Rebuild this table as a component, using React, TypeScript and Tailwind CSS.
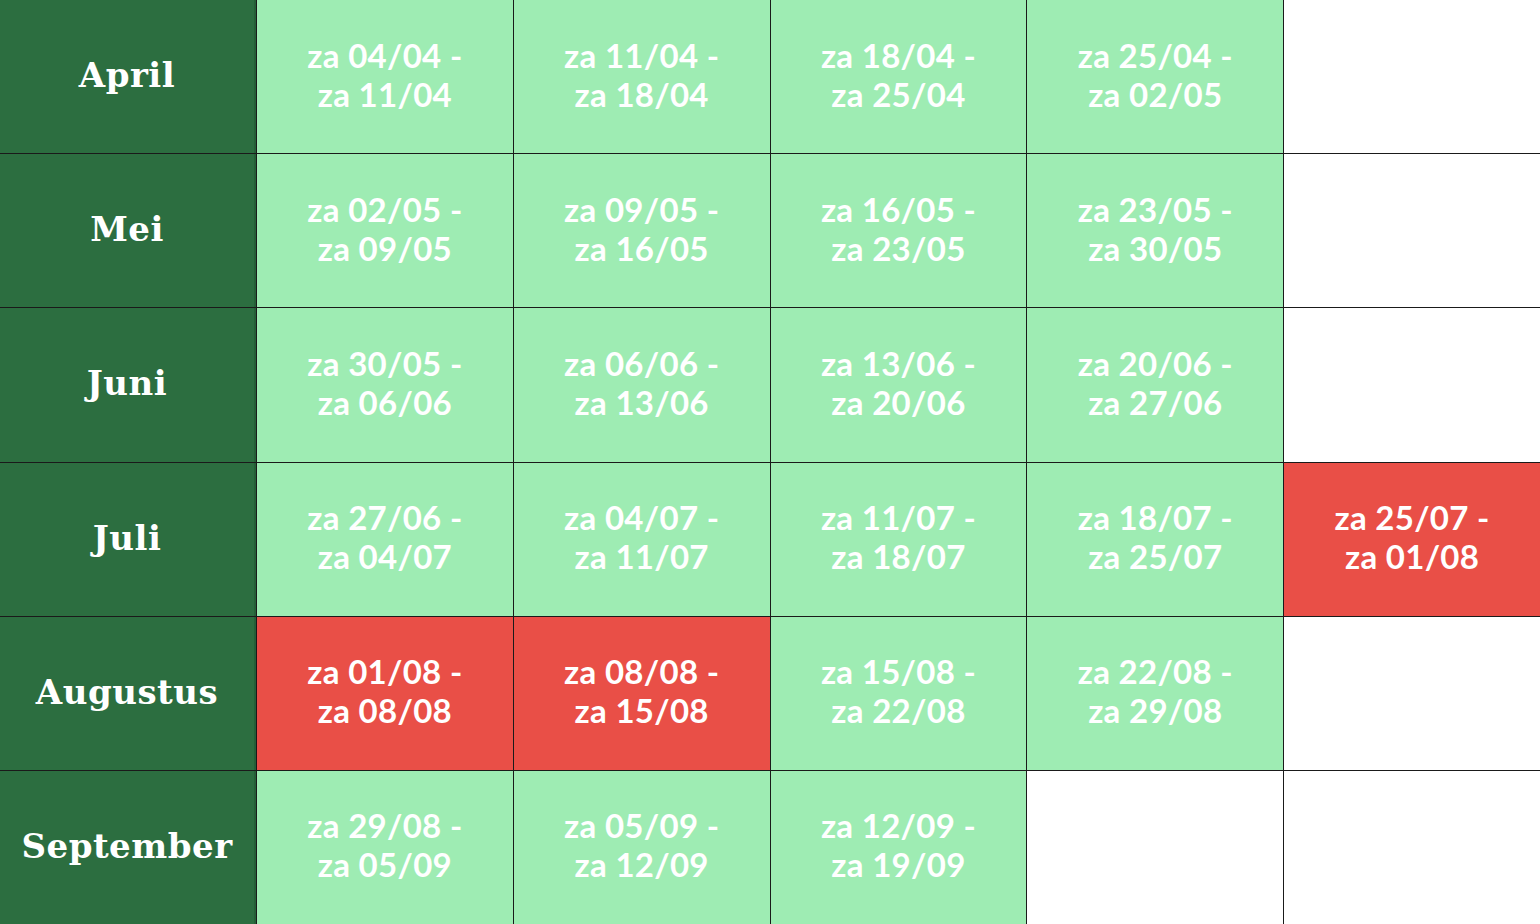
import React from "react";

type Cell = { t: string; c: "g" | "r" } | null;

const rows: { m: string; cells: Cell[] }[] = [
  { m: "April", cells: [{ t: "za 04/04 -|za 11/04", c: "g" }, { t: "za 11/04 -|za 18/04", c: "g" }, { t: "za 18/04 -|za 25/04", c: "g" }, { t: "za 25/04 -|za 02/05", c: "g" }, null] },
  { m: "Mei", cells: [{ t: "za 02/05 -|za 09/05", c: "g" }, { t: "za 09/05 -|za 16/05", c: "g" }, { t: "za 16/05 -|za 23/05", c: "g" }, { t: "za 23/05 -|za 30/05", c: "g" }, null] },
  { m: "Juni", cells: [{ t: "za 30/05 -|za 06/06", c: "g" }, { t: "za 06/06 -|za 13/06", c: "g" }, { t: "za 13/06 -|za 20/06", c: "g" }, { t: "za 20/06 -|za 27/06", c: "g" }, null] },
  { m: "Juli", cells: [{ t: "za 27/06 -|za 04/07", c: "g" }, { t: "za 04/07 -|za 11/07", c: "g" }, { t: "za 11/07 -|za 18/07", c: "g" }, { t: "za 18/07 -|za 25/07", c: "g" }, { t: "za 25/07 -|za 01/08", c: "r" }] },
  { m: "Augustus", cells: [{ t: "za 01/08 -|za 08/08", c: "r" }, { t: "za 08/08 -|za 15/08", c: "r" }, { t: "za 15/08 -|za 22/08", c: "g" }, { t: "za 22/08 -|za 29/08", c: "g" }, null] },
  { m: "September", cells: [{ t: "za 29/08 -|za 05/09", c: "g" }, { t: "za 05/09 -|za 12/09", c: "g" }, { t: "za 12/09 -|za 19/09", c: "g" }, null, null] },
];

export default function App() {
  return (
    <div className="w-[1540px] h-[924px] bg-[#1a1a1a] grid grid-cols-[256px_repeat(5,1fr)] grid-rows-6 gap-px overflow-hidden">
      {rows.map((r) => (
        <React.Fragment key={r.m}>
          <div className="bg-[#2c6e40] border-r-2 border-[#255f37] flex items-center justify-center text-white text-[34px] font-bold font-['DejaVu_Serif',serif] tracking-[0.5px] pb-[2px]">
            {r.m}
          </div>
          {r.cells.map((c, i) =>
            c ? (
              <div
                key={i}
                className={`${c.c === "g" ? "bg-[#9eecb3]" : "bg-[#e94f47]"} flex flex-col items-center justify-center text-white text-[33px] leading-[39px] font-bold font-['Lato',sans-serif] tracking-[0.3px] pb-[4px]`}
              >
                {c.t.split("|").map((l, j) => (
                  <span key={j}>{l}</span>
                ))}
              </div>
            ) : (
              <div key={i} className="bg-white" />
            )
          )}
        </React.Fragment>
      ))}
    </div>
  );
}
